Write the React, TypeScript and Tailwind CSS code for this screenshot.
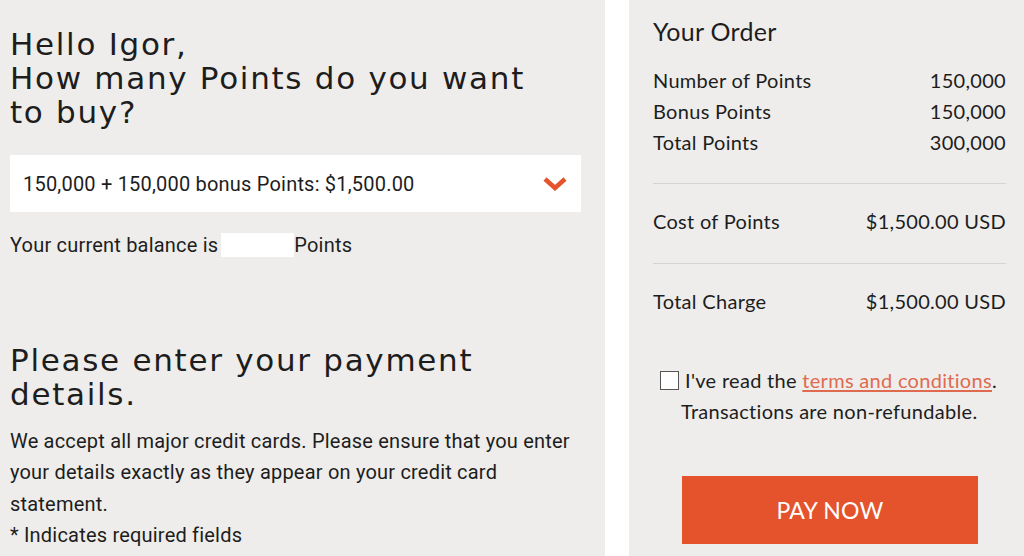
export default function App() {
  const rows = [
    ["Number of Points", "150,000"],
    ["Bonus Points", "150,000"],
    ["Total Points", "300,000"],
  ];

  return (
    <div className="flex h-[556px] w-[1024px] overflow-hidden bg-white text-[#1d1d1d]">
      {/* Left: points picker + payment intro */}
      <section className="w-[605px] shrink-0 bg-[#eeedeb] px-[10px] pt-[27px] font-['Roboto',sans-serif]">
        <h1 className="font-['DejaVu_Sans',sans-serif] text-[31px] leading-[34px] tracking-[0.055em]">
          Hello Igor,
          <br />
          How many Points do you want
          <br />
          to buy?
        </h1>

        <div className="mt-[26px] flex h-[57px] w-[571px] items-center justify-between bg-white pl-[13px] pr-[14px]">
          <span className="text-[20px] tracking-[0.01em]">150,000 + 150,000 bonus Points: $1,500.00</span>
          <svg width="24" height="14" viewBox="0 0 24 14" className="text-[#e4532c]">
            <path d="M2 2 L12 11 L22 2" fill="none" stroke="currentColor" strokeWidth="4.5" strokeLinejoin="miter" />
          </svg>
        </div>

        <div className="mt-[21px] flex h-[24px] items-center text-[20px] tracking-[0.01em]">
          Your current balance is
          <span className="ml-[3px] inline-block h-[24px] w-[73px] bg-white" />
          Points
        </div>

        <h2 className="mt-[86px] font-['DejaVu_Sans',sans-serif] text-[31px] leading-[34px] tracking-[0.055em]">
          Please enter your payment
          <br />
          details.
        </h2>

        <p className="mt-[15px] text-[20px] leading-[31.4px] tracking-[0.01em]">
          We accept all major credit cards. Please ensure that you enter
          <br />
          your details exactly as they appear on your credit card
          <br />
          statement.
          <br />* Indicates required fields
        </p>
      </section>

      {/* Right: order summary */}
      <aside className="ml-[24px] flex-1 bg-[#eeedeb] pl-[24px] pr-[18px] pt-[15px] font-['Lato',sans-serif] text-[20px] tracking-[0.015em]">
        <h3 className="text-[25px] leading-[32px]">Your Order</h3>

        <div className="mt-[17px] flex flex-col">
          {rows.map(([k, v]) => (
            <div key={k} className="flex h-[31px] items-center justify-between">
              <span>{k}</span>
              <span>{v}</span>
            </div>
          ))}
        </div>

        <div className="mt-[26px] border-t border-[#d6d5d2]" />
        <div className="flex h-[79px] items-center justify-between pb-[6px]">
          <span>Cost of Points</span>
          <span>$1,500.00 USD</span>
        </div>
        <div className="border-t border-[#d6d5d2]" />
        <div className="flex h-[79px] items-center justify-between pb-[6px]">
          <span>Total Charge</span>
          <span>$1,500.00 USD</span>
        </div>

        <div className="mt-[22px] pl-[7px] leading-[31px]">
          <div className="flex items-center">
            <span className="mr-[6px] inline-block h-[19px] w-[19px] border border-[#555] bg-white" />
            I've read the&nbsp;
            <a className="text-[#e06a4f] underline underline-offset-2">terms and conditions</a>.
          </div>
          <div className="pl-[21px]">Transactions are non-refundable.</div>
        </div>

        <div className="mt-[49px] pl-[29px]">
          <button className="h-[68px] w-[296px] bg-[#e4532c] text-[23px] tracking-[0.01em] text-white">
            PAY NOW
          </button>
        </div>
      </aside>
    </div>
  );
}
